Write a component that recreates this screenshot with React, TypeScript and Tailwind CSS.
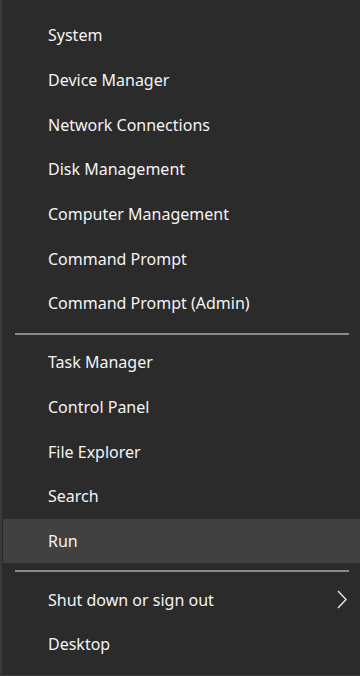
type Item = { label: string; active?: boolean; submenu?: boolean };

const groups: Item[][] = [
  [
    { label: "System" },
    { label: "Device Manager" },
    { label: "Network Connections" },
    { label: "Disk Management" },
    { label: "Computer Management" },
    { label: "Command Prompt" },
    { label: "Command Prompt (Admin)" },
  ],
  [
    { label: "Task Manager" },
    { label: "Control Panel" },
    { label: "File Explorer" },
    { label: "Search" },
    { label: "Run", active: true },
  ],
  [{ label: "Shut down or sign out", submenu: true }, { label: "Desktop" }],
];

function MenuItem({ item }: { item: Item }) {
  return (
    <div
      className={`flex h-[44.7px] items-center justify-between pl-[45px] pr-[13px] ${
        item.active ? "bg-[#414141]" : ""
      }`}
    >
      <span className="text-[16px] text-[#f4f4f4]">{item.label}</span>
      {item.submenu && (
        <svg width="10" height="19" viewBox="0 0 10 19" fill="none" className="text-[#e8e8e8]">
          <polyline points="1,1 9,9.5 1,18" stroke="currentColor" strokeWidth="1.4" />
        </svg>
      )}
    </div>
  );
}

export default function App() {
  return (
    <div className="h-[676px] w-[360px] bg-[#2b2b2b] font-['Noto_Sans',sans-serif]">
      <div className="flex h-full flex-col border-b border-l-2 border-[#3a3a3a] pt-[13px] pl-px">
        {groups.map((group, i) => (
          <div key={i}>
            {i > 0 && (
              <div className="pt-[7px] pb-[5px] pl-[12px] pr-[11px]">
                <div className="h-[2px] bg-[#8a8a8a]" />
              </div>
            )}
            {group.map((item) => (
              <MenuItem key={item.label} item={item} />
            ))}
          </div>
        ))}
      </div>
    </div>
  );
}
